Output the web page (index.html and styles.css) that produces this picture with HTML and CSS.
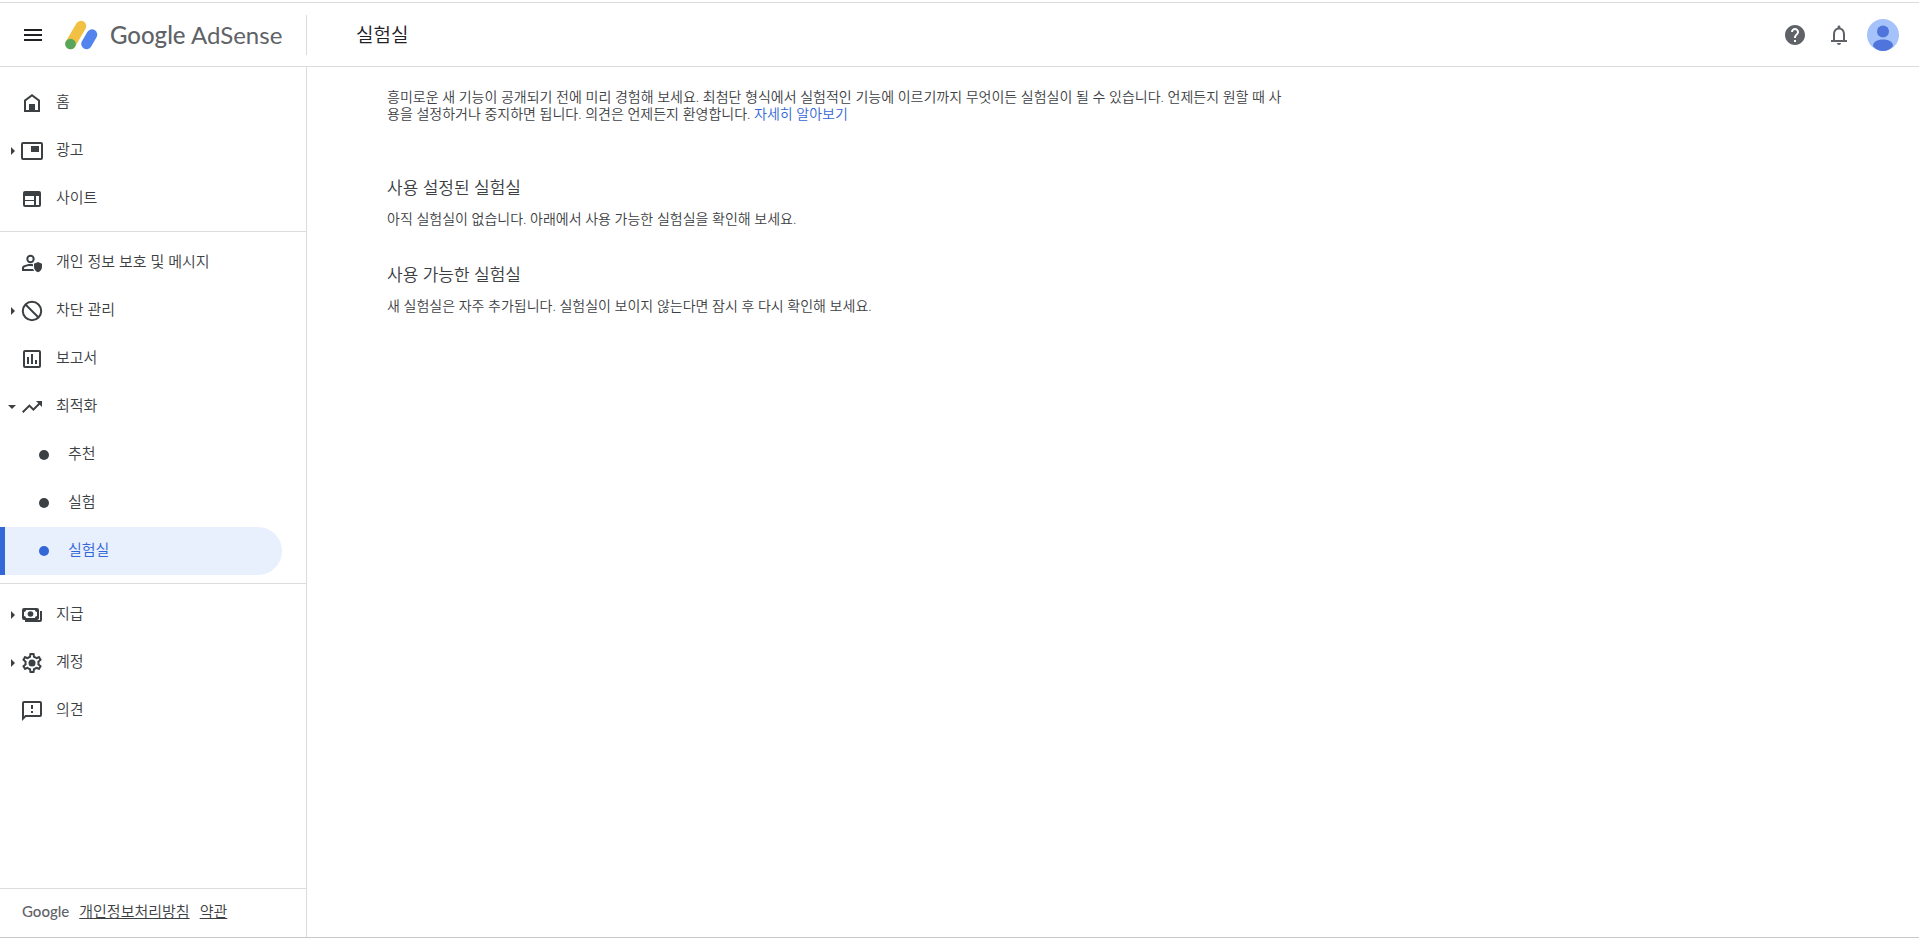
FILE: index.html
```
<!DOCTYPE html>
<html lang="ko">
<head>
  <meta charset="UTF-8" />
  <meta name="viewport" content="width=device-width, initial-scale=1.0"/>
  <title>실험실 - Google AdSense</title>
  <link rel="stylesheet" href="styles.css">
</head>
<body>
  <div class="app">
    <header class="header">
      <div class="brand">
        <button class="icon-btn menu-btn" aria-label="메뉴">
          <svg class="icon" viewBox="0 0 24 24"><path d="M3 6h18v2H3zM3 11h18v2H3zM3 16h18v2H3z"/></svg>
        </button>
        <a class="logo" href="#">
          <svg class="logo-mark" viewBox="0 0 34 30">
            <path d="M17 6L6.500 24" stroke="#f2c043" stroke-width="10.500" stroke-linecap="round"/>
            <path d="M28 14.500L22.500 24" stroke="#5383ec" stroke-width="10.500" stroke-linecap="round"/>
            <circle cx="6.500" cy="24" r="5.300" fill="#58a55c"/>
          </svg>
          <span class="logo-text"><b>Google</b> AdSense</span>
        </a>
      </div>
      <h1 class="title">실험실</h1>
      <div class="actions">
        <button class="icon-btn" aria-label="도움말">
          <svg class="icon" viewBox="0 0 24 24"><path d="M12 2C6.480 2 2 6.480 2 12s4.480 10 10 10 10-4.480 10-10S17.520 2 12 2zm1 17h-2v-2h2v2zm2.070-7.750l-.9.920C13.450 12.900 13 13.500 13 15h-2v-.5c0-1.100.45-2.100 1.170-2.830l1.240-1.260c.37-.36.59-.86.59-1.410 0-1.100-.9-2-2-2s-2 .9-2 2H8c0-2.210 1.790-4 4-4s4 1.790 4 4c0 .88-.36 1.680-.93 2.250z"/></svg>
        </button>
        <button class="icon-btn" aria-label="알림">
          <svg class="icon" viewBox="0 0 24 24"><path d="M12 22c1.100 0 2-.9 2-2h-4c0 1.100.9 2 2 2zm6-5v-6c0-3.070-1.630-5.640-4.500-6.320V4c0-.83-.67-1.500-1.500-1.500s-1.500.67-1.500 1.500v.68C7.640 5.360 6 7.920 6 11v6H4v2h16v-2h-2zm-2 0H8v-6c0-2.480 1.510-4.500 4-4.500s4 2.020 4 4.500v6z"/></svg>
        </button>
        <button class="icon-btn" aria-label="계정">
          <svg class="avatar" viewBox="0 0 32 32">
            <circle cx="16" cy="16" r="16" fill="#a6c2fa"/>
            <circle cx="16" cy="12.500" r="6" fill="#4f74dc"/>
            <path d="M6 27c0-4 4-6.500 10-6.500S26 23 26 27c-2.500 3.200-6.200 5-10 5S8.500 30.200 6 27z" fill="#4f74dc"/>
          </svg>
        </button>
      </div>
    </header>

    <div class="body">
      <aside class="sidebar">
        <nav class="nav">
          <ul class="group">
            <li><a class="item" href="#">
              <svg class="icon" viewBox="0 0 24 24"><path fill-rule="evenodd" d="M4 21V9l8-6 8 6v12zM6 19h3v-6h6v6h3v-9l-6-4.500L6 10z"/><path d="M9 13h6v8H9z"/></svg><span>홈</span></a></li>
            <li><a class="item has-sub" href="#">
              <svg class="icon" viewBox="0 0 24 24"><path d="M11 7h8v6h-8z"/><path fill-rule="evenodd" d="M3 3h18a2 2 0 0 1 2 2v14a2 2 0 0 1-2 2H3a2 2 0 0 1-2-2V5a2 2 0 0 1 2-2zM3 5v14h18V5z"/></svg><span>광고</span></a></li>
            <li><a class="item" href="#">
              <svg class="icon" viewBox="0 0 24 24"><path fill-rule="evenodd" d="M5 4h14a2 2 0 0 1 2 2v12a2 2 0 0 1-2 2H5a2 2 0 0 1-2-2V6a2 2 0 0 1 2-2zM5 9v4h9V9zM5 14v4h9v-4zM16 9v9h3V9z"/></svg><span>사이트</span></a></li>
          </ul>
          <ul class="group">
            <li><a class="item" href="#">
              <svg class="icon" viewBox="0 0 24 24"><circle cx="10.500" cy="8" r="3.200" fill="none" stroke="currentColor" stroke-width="2"/><path d="M13 18H4v-.8c0-.4.2-.7.6-.9C6.300 15.400 8.400 15 10.500 15l2.500.2v-2c-.8-.1-1.700-.2-2.500-.2-2.500 0-5 .6-6.900 1.600-1 .5-1.600 1.500-1.600 2.600V20h12.300c-.6-.6-1-1.300-1.300-2z"/><path d="M18 11l-4 1.700v3.200c0 2.500 1.700 4.700 4 5.300 2.300-.6 4-2.800 4-5.300v-3.200z"/></svg><span>개인 정보 보호 및 메시지</span></a></li>
            <li><a class="item has-sub" href="#">
              <svg class="icon" viewBox="0 0 24 24"><g fill="none" stroke="currentColor" stroke-width="2"><circle cx="12" cy="12" r="9.200"/><path d="M5.500 5.500l13 13"/></g></svg><span>차단 관리</span></a></li>
            <li><a class="item" href="#">
              <svg class="icon" viewBox="0 0 24 24"><path fill-rule="evenodd" d="M5 3h14a2 2 0 0 1 2 2v14a2 2 0 0 1-2 2H5a2 2 0 0 1-2-2V5a2 2 0 0 1 2-2zM5 5v14h14V5z"/><path d="M7 10h2v7H7zM11 7h2v10h-2zM15 13h2v4h-2z"/></svg><span>보고서</span></a></li>
            <li><a class="item has-sub open" href="#">
              <svg class="icon" viewBox="0 0 24 24"><path d="M16 6l2.290 2.290-4.880 4.880-4-4L2 16.590 3.410 18l6-6 4 4 6.300-6.290L22 12V6z"/></svg><span>최적화</span></a></li>
            <li><a class="item sub" href="#"><span>추천</span></a></li>
            <li><a class="item sub" href="#"><span>실험</span></a></li>
            <li><a class="item sub active" href="#"><span>실험실</span></a></li>
          </ul>
          <ul class="group">
            <li><a class="item has-sub" href="#">
              <svg class="icon" viewBox="0 0 24 24"><path fill-rule="evenodd" d="M4 5h13a2 2 0 0 1 2 2v8a2 2 0 0 1-2 2H4a2 2 0 0 1-2-2V7a2 2 0 0 1 2-2zM6 7c0 1.100-.9 2-2 2v4c1.100 0 2 .9 2 2h9c0-1.100.9-2 2-2V9c-1.100 0-2-.9-2-2z"/><circle cx="10.500" cy="11" r="2.800"/><path d="M20 8h2v9a2 2 0 0 1-2 2H5v-2h15z"/></svg><span>지급</span></a></li>
            <li><a class="item has-sub" href="#">
              <svg class="icon" viewBox="0 0 24 24"><path d="M19.430 12.980c.04-.32.07-.64.07-.98s-.03-.66-.07-.98l2.110-1.650c.19-.15.24-.42.12-.64l-2-3.460c-.09-.16-.26-.25-.44-.25-.06 0-.12.01-.17.03l-2.490 1c-.52-.4-1.080-.73-1.690-.98l-.38-2.650C14.460 2.180 14.250 2 14 2h-4c-.25 0-.46.18-.49.42l-.38 2.650c-.61.25-1.170.59-1.690.98l-2.490-1c-.06-.02-.12-.03-.18-.03-.17 0-.34.09-.43.25l-2 3.460c-.13.22-.07.49.12.64l2.110 1.650c-.04.32-.07.65-.07.98s.03.66.07.98l-2.110 1.650c-.19.15-.24.42-.12.64l2 3.460c.09.16.26.25.44.25.06 0 .12-.01.17-.03l2.490-1c.52.4 1.080.73 1.690.98l.38 2.650c.03.24.24.42.49.42h4c.25 0 .46-.18.49-.42l.38-2.650c.61-.25 1.170-.59 1.690-.98l2.490 1c.06.02.12.03.18.03.17 0 .34-.09.43-.25l2-3.460c.12-.22.07-.49-.12-.64l-2.110-1.650zm-1.980-1.710c.04.31.05.52.05.73 0 .21-.02.43-.05.73l-.14 1.130.89.7 1.080.84-.7 1.210-1.270-.51-1.040-.42-.9.680c-.43.32-.84.56-1.250.73l-1.060.43-.16 1.130-.2 1.350h-1.400l-.19-1.350-.16-1.130-1.060-.43c-.43-.18-.83-.41-1.230-.71l-.91-.7-1.060.43-1.270.51-.7-1.210 1.080-.84.89-.7-.14-1.130c-.03-.31-.05-.54-.05-.74s.02-.43.05-.73l.14-1.130-.89-.7-1.080-.84.7-1.210 1.270.51 1.040.42.9-.68c.43-.32.84-.56 1.250-.73l1.060-.43.16-1.130.2-1.350h1.390l.19 1.350.16 1.130 1.060.43c.43.18.83.41 1.230.71l.91.7 1.060-.43 1.270-.51.7 1.210-1.070.85-.89.7.14 1.130z"/><circle cx="12" cy="12" r="3.500"/></svg><span>계정</span></a></li>
            <li><a class="item" href="#">
              <svg class="icon" viewBox="0 0 24 24"><path fill-rule="evenodd" d="M4 2h16a2 2 0 0 1 2 2v12a2 2 0 0 1-2 2H6l-4 4V4a2 2 0 0 1 2-2zM4 4v13.200L5.200 16H20V4z"/><path d="M11 6h2v4h-2zM11 12h2v2h-2z"/></svg><span>의견</span></a></li>
          </ul>
        </nav>
        <footer class="footer">
          <span class="google">Google</span>
          <a href="#">개인정보처리방침</a>
          <a href="#">약관</a>
        </footer>
      </aside>

      <main class="content">
        <p class="intro">흥미로운 새 기능이 공개되기 전에 미리 경험해 보세요. 최첨단 형식에서 실험적인 기능에 이르기까지 무엇이든 실험실이 될 수 있습니다. 언제든지 원할 때 사용을 설정하거나 중지하면 됩니다. 의견은 언제든지 환영합니다. <a href="#">자세히 알아보기</a></p>
        <section class="labs">
          <h2>사용 설정된 실험실</h2>
          <p>아직 실험실이 없습니다. 아래에서 사용 가능한 실험실을 확인해 보세요.</p>
        </section>
        <section class="labs">
          <h2>사용 가능한 실험실</h2>
          <p>새 실험실은 자주 추가됩니다. 실험실이 보이지 않는다면 잠시 후 다시 확인해 보세요.</p>
        </section>
      </main>
    </div>
  </div>
</body>
</html>
```
FILE: styles.css
```
* {
  box-sizing: border-box;
}

body {
  margin: 0;
  font-family: 'Open Sans', 'Noto Sans CJK KR', sans-serif;
  font-size: 14px;
  font-weight: 350;
  color: #3c4043;
  background: #fff;
}

h1, h2, p, ul {
  margin: 0;
  padding: 0;
  font-weight: 350;
}

ul {
  list-style: none;
}

.app {
  display: flex;
  flex-direction: column;
  min-height: 100vh;
  padding-top: 2px;
  border-bottom: 1px solid #c8c8cc;
}

.icon {
  display: block;
  flex: none;
  width: 24px;
  height: 24px;
  fill: currentColor;
}

.header {
  display: flex;
  align-items: center;
  height: 65px;
  padding-right: 14px;
  border-top: 1px solid #dadce0;
  border-bottom: 1px solid #dadce0;
}

.brand {
  display: flex;
  align-items: center;
  width: 307px;
  height: 40px;
  padding-left: 11px;
  border-right: 1px solid #dadce0;
}

.icon-btn {
  display: flex;
  align-items: center;
  justify-content: center;
  width: 44px;
  height: 44px;
  padding: 0;
  border: none;
  background: none;
  color: #5f6368;
  cursor: pointer;
}

.menu-btn {
  color: #202124;
}

.logo {
  display: flex;
  align-items: center;
  gap: 12px;
  margin-left: 9px;
  text-decoration: none;
  color: #5f6368;
}

.logo-mark {
  width: 34px;
  height: 30px;
  fill: none;
}

.logo-text {
  font-family: Lato, sans-serif;
  font-size: 24px;
  font-weight: 400;
}

.logo-text b {
  font-weight: 500;
}

.title {
  margin-left: 49px;
  font-size: 19px;
  line-height: 24px;
  color: #202124;
}

.actions {
  display: flex;
  margin-left: auto;
}

.avatar {
  width: 32px;
  height: 32px;
}

.body {
  display: flex;
  flex: 1;
}

.sidebar {
  display: flex;
  flex-direction: column;
  flex: none;
  width: 307px;
  border-right: 1px solid #dadce0;
}

.nav {
  flex: 1;
  padding-top: 4px;
}

.group {
  padding: 8px 0;
}

.group + .group {
  padding-top: 7px;
  border-top: 1px solid #dadce0;
}

.item {
  display: flex;
  align-items: center;
  gap: 12px;
  height: 48px;
  margin-right: 24px;
  padding-left: 20px;
  border-radius: 0 24px 24px 0;
  font-size: 15px;
  line-height: 20px;
  color: #3c4043;
  text-decoration: none;
}

.item span {
  padding-bottom: 4px;
}

.has-sub {
  padding-left: 11px;
  gap: 5px;
}

.has-sub .icon {
  margin-right: 7px;
}

/* expand arrow */
.has-sub::before {
  content: "";
  border: solid transparent;
  border-width: 4px 0 4px 4px;
  border-left-color: currentColor;
}

.open {
  padding-left: 8px;
  gap: 4px;
}

.open .icon {
  margin-right: 8px;
}

.open::before {
  border-width: 4px 4px 0;
  border-color: currentColor transparent;
}

.sub {
  gap: 19px;
  padding-left: 39px;
}

.sub::before {
  content: "";
  width: 10px;
  height: 10px;
  border-radius: 50%;
  background: currentColor;
}

.active {
  padding-left: 34px;
  border-left: 5px solid #3367d6;
  background: #e8effd;
  color: #3367d6;
}

.footer {
  display: flex;
  align-items: center;
  gap: 10px;
  height: 49px;
  padding: 0 0 4px 22px;
  border-top: 1px solid #dadce0;
  font-size: 15px;
  line-height: 20px;
}

.footer a {
  color: #3c4043;
}

.google {
  font-family: Lato, sans-serif;
  font-weight: 500;
  color: #5f6368;
}

.content {
  flex: 1;
  max-width: 1060px;
  padding: 21px 80px;
}

.intro {
  line-height: 17px;
}

.intro a {
  color: #3367d6;
  text-decoration: none;
}

.labs {
  margin-top: 34px;
}

.intro + .labs {
  margin-top: 54px;
}

.labs h2 {
  margin-bottom: 9px;
  font-size: 17px;
  line-height: 24px;
}

.labs p {
  line-height: 20px;
}
```
